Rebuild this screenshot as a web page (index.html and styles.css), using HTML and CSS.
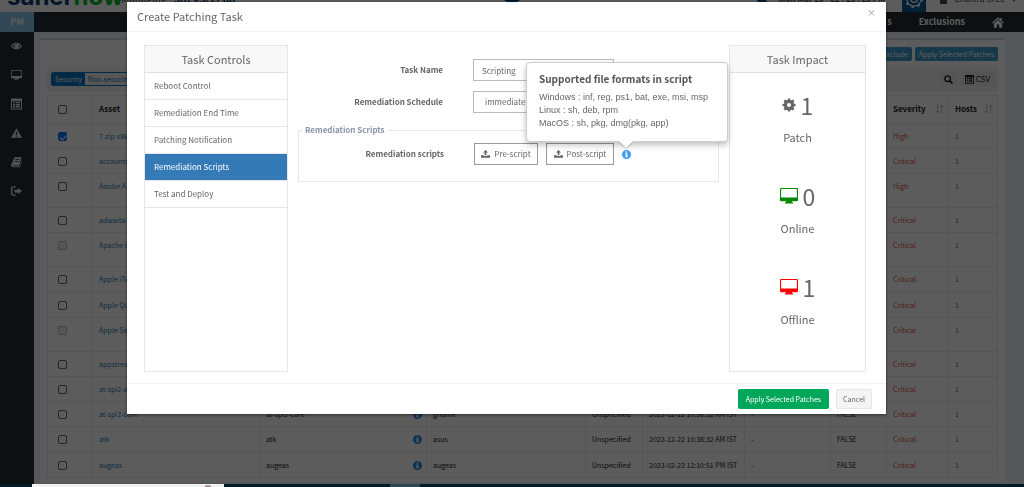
FILE: index.html
```
<!DOCTYPE html>
<html lang="en">
<head>
<meta charset="utf-8">
<title>Create Patching Task</title>
<link rel="stylesheet" href="styles.css">
</head>
<body>
<svg class="sprite" aria-hidden="true">
  <symbol id="monitor" viewBox="0 0 18 16"><path fill-rule="evenodd" d="M1.300 0h15.400A1.300 1.300 0 0 1 18 1.300v10.700a1.300 1.300 0 0 1-1.300 1.300H12v1H13V15.500H5v-1.200h1v-1h-4.700A1.300 1.300 0 0 1 0 12V1.300A1.300 1.300 0 0 1 1.300 0zM1.100 1.100v8.400h15.800V1.100z"/></symbol>
  <symbol id="gear" viewBox="0 0 16 16"><circle cx="8" cy="8" r="4.100" fill="none" stroke="currentColor" stroke-width="3.600"/><path id="tooth" d="M6.200 3.500L6.800.5h2.400l.6 3zM6.200 12.500l.6 3h2.400l.6-3z"/><use href="#tooth" transform="rotate(45 8 8)"/><use href="#tooth" transform="rotate(90 8 8)"/><use href="#tooth" transform="rotate(135 8 8)"/></symbol>
  <symbol id="upload" viewBox="0 0 16 14"><path d="M8 0l4.500 4.500H9.600V9H6.400V4.500H3.500zM0 9h5v1.500h6V9h5v4.500H0z"/></symbol>
  <symbol id="info" viewBox="0 0 16 16"><path fill-rule="evenodd" d="M8 0a8 8 0 1 1 0 16A8 8 0 0 1 8 0zM6.500 2.600v2.400h3V2.600zM5.500 6.400V8h1v3.500h-1V13h5v-1.500h-1V6.400z"/></symbol>
  <symbol id="sort" viewBox="0 0 16 16"><path d="M4 0h1.500v12H8l-3.200 4L1.500 12H4zM11 16h1.500V4H15l-3.200-4L8.500 4H11z"/></symbol>
  <symbol id="sheet" viewBox="0 0 16 16"><path fill-rule="evenodd" d="M0 0h16v16H0zM1.500 4v10.500h13V4zM3 5h3v2H3zM7 5h6v2H7zM3 8h3v2H3zM7 8h6v2H7zM3 11h3v2H3zM7 11h6v2H7z"/></symbol>
</svg>

<div class="app">
  <header class="top">
    <div class="logo">saner<span>now</span></div>
    <div class="site">Managing <b>SiteXSecPod</b></div>
    <div class="dots">•••</div>
    <div class="clock"><i></i>Mon Mar 20 - 02 : 23 : 20 PM</div>
    <div class="settings"><svg viewBox="0 0 24 24"><g fill="none" stroke="currentColor" stroke-width="1.500"><circle cx="12" cy="12" r="8.500"/><circle cx="12" cy="12" r="4"/><circle cx="12" cy="12" r="10" stroke-width="2" stroke-dasharray="3 4.850"/></g></svg></div>
    <div class="user"><i></i>Chaitra Sree <small>▾</small></div>
  </header>

  <nav class="bar">
    <a class="pm" href="#">PM</a>
    <a class="nav-link cut" href="#">s</a>
    <a class="nav-link" href="#">Exclusions</a>
    <a class="home" href="#" aria-label="Home"><svg viewBox="0 0 16 14"><path d="M8 0l3 2.700V1h2v3.500L16 7l-1 1.200L8 2.200 1 8.200 0 7zM8 3.500l5.500 4.700V14H9.500V9.500h-3V14h-4V8.200z"/></svg></a>
  </nav>

  <div class="shell">
    <aside class="side">
      <a href="#" aria-label="View"><svg viewBox="0 0 16 16"><path fill-rule="evenodd" d="M0 8c4-6.500 12-6.500 16 0-4 6.500-12 6.500-16 0zM2 8c3 4 9 4 12 0-1-1.200-2-2-3-2.500a3.600 3.600 0 1 1-6 0C4 6 3 6.800 2 8zM6 7h1.200c0-1 .5-1.500 1.300-1.500v-1C7 4.500 6 5.500 6 7z"/></svg></a>
      <a href="#" aria-label="Devices"><svg><use href="#monitor"/></svg></a>
      <a href="#" aria-label="Reports"><svg><use href="#sheet"/></svg></a>
      <a href="#" aria-label="Alerts"><svg viewBox="0 0 16 16"><path fill-rule="evenodd" d="M8 1l8 14H0zM7 6v4.500h2V6zM7 11.500v2h2v-2z"/></svg></a>
      <a href="#" aria-label="Library"><svg viewBox="0 0 16 16"><path fill-rule="evenodd" d="M5 1h10.500l-3.500 12H2.500c-.6 0-.5 1 .2 1H13l2.500-8 .5 1-2.500 8.500h-11C.5 15.500-.3 14 .3 12zM6.300 4l-.3 1h6l.3-1zM5.600 6.500l-.3 1h6l.3-1z"/></svg></a>
      <a href="#" aria-label="Sign out"><svg viewBox="0 0 16 16"><path d="M7 1v2H3.500Q2 3 2 4.500v7Q2 13 3.500 13H7v2H3.500Q0 15 0 11.500v-7Q0 1 3.500 1zM10 3.500L16 8l-6 4.500V10H5V6h5z"/></svg></a>
    </aside>

    <main class="panel">
      <div class="actions">
        <button class="blue">Exclude</button>
        <button class="blue">Apply Selected Patches</button>
      </div>
      <div class="tools">
        <div class="tabs"><button class="on">Security</button><button>Non-security</button></div>
        <button class="tool" aria-label="Search"><svg viewBox="0 0 16 16"><g fill="none" stroke="currentColor"><circle cx="6.500" cy="6.500" r="5" stroke-width="2.500"/><path d="M10 10l5 5" stroke-width="3"/></g></svg></button>
        <button class="tool"><svg><use href="#sheet"/></svg>CSV</button>
      </div>
      <table class="grid">
        <colgroup><col class="c-check"><col><col class="c-fix"><col class="c-vendor"><col class="c-type"><col class="c-date"><col class="c-dash"><col class="c-flag"><col class="c-sev"><col class="c-host"></colgroup>
        <thead><tr><th><input type="checkbox" aria-label="Select all"></th><th>Asset</th><th></th><th></th><th></th><th></th><th></th><th></th><th><div class="sortable">Severity <svg><use href="#sort"/></svg></div></th><th><div class="sortable">Hosts <svg><use href="#sort"/></svg></div></th></tr></thead>
        <tbody>
          <tr><td><input type="checkbox" checked aria-label="7-zip x86"></td><td><a href="#">7-zip x86</a></td><td></td><td></td><td></td><td></td><td></td><td></td><td class="sev">High</td><td><a href="#">1</a></td></tr>
          <tr><td><input type="checkbox" aria-label="accounts"></td><td><a href="#">accounts</a></td><td></td><td></td><td></td><td></td><td></td><td></td><td class="sev">Critical</td><td><a href="#">1</a></td></tr>
          <tr class="tall"><td><input type="checkbox" aria-label="Adobe A"></td><td><a href="#">Adobe A</a></td><td></td><td></td><td></td><td></td><td></td><td></td><td class="sev">High</td><td><a href="#">1</a></td></tr>
          <tr><td><input type="checkbox" aria-label="adwaita"></td><td><a href="#">adwaita-</a></td><td></td><td></td><td></td><td></td><td></td><td></td><td class="sev">Critical</td><td><a href="#">1</a></td></tr>
          <tr class="tall"><td><input type="checkbox" disabled aria-label="Apache"></td><td><a href="#">Apache H</a></td><td></td><td></td><td></td><td></td><td></td><td></td><td class="sev">Critical</td><td><a href="#">1</a></td></tr>
          <tr><td><input type="checkbox" aria-label="Apple iTu"></td><td><a href="#">Apple iTu</a></td><td></td><td></td><td></td><td></td><td></td><td></td><td class="sev">Critical</td><td><a href="#">1</a></td></tr>
          <tr><td><input type="checkbox" aria-label="Apple Qu"></td><td><a href="#">Apple Qu</a></td><td></td><td></td><td></td><td></td><td></td><td></td><td class="sev">Critical</td><td><a href="#">1</a></td></tr>
          <tr class="tall"><td><input type="checkbox" disabled aria-label="Apple Sa"></td><td><a href="#">Apple Sa</a></td><td></td><td></td><td></td><td></td><td></td><td></td><td class="sev">Critical</td><td><a href="#">1</a></td></tr>
          <tr><td><input type="checkbox" aria-label="appstrea"></td><td><a href="#">appstrea</a></td><td></td><td></td><td></td><td></td><td></td><td></td><td class="sev">Critical</td><td><a href="#">1</a></td></tr>
          <tr><td><input type="checkbox" aria-label="at-spi2-a"></td><td><a href="#">at-spi2-a</a></td><td></td><td></td><td></td><td></td><td></td><td></td><td class="sev">Critical</td><td><a href="#">1</a></td></tr>
          <tr><td><input type="checkbox" aria-label="at-spi2-core"></td><td><a href="#">at-spi2-core</a></td><td><div class="fix">at-spi2-core <svg><use href="#info"/></svg></div></td><td>gnome</td><td>Unspecified</td><td>2022-12-22 10:38:32 AM IST</td><td>-</td><td>FALSE</td><td class="sev">Critical</td><td><a href="#">1</a></td></tr>
          <tr><td><input type="checkbox" aria-label="atk"></td><td><a href="#">atk</a></td><td><div class="fix">atk <svg><use href="#info"/></svg></div></td><td>asus</td><td>Unspecified</td><td>2022-12-22 10:38:32 AM IST</td><td>-</td><td>FALSE</td><td class="sev">Critical</td><td><a href="#">1</a></td></tr>
          <tr><td><input type="checkbox" aria-label="augeas"></td><td><a href="#">augeas</a></td><td><div class="fix">augeas <svg><use href="#info"/></svg></div></td><td>augeas</td><td>Unspecified</td><td>2023-02-23 12:10:51 PM IST</td><td>-</td><td>FALSE</td><td class="sev">Critical</td><td><a href="#">1</a></td></tr>
        </tbody>
      </table>
    </main>
  </div>
</div>

<div class="backdrop">
  <section class="modal" role="dialog" aria-labelledby="title">
    <header class="modal-head"><h1 id="title">Create Patching Task</h1><button class="close" aria-label="Close">×</button></header>
    <div class="modal-body">
      <nav class="box controls">
        <h2>Task Controls</h2>
        <a href="#">Reboot Control</a>
        <a href="#">Remediation End Time</a>
        <a href="#">Patching Notification</a>
        <a class="active" href="#">Remediation Scripts</a>
        <a href="#">Test and Deploy</a>
      </nav>
      <form class="form">
        <div class="row"><label for="name">Task Name</label><input id="name" type="text" value="Scripting"></div>
        <div class="row"><label for="when">Remediation Schedule</label><select id="when"><option>immediate</option></select></div>
        <fieldset>
          <legend>Remediation Scripts</legend>
          <div class="row">
            <span class="label">Remediation scripts</span>
            <button type="button" class="script"><svg><use href="#upload"/></svg>Pre-script</button>
            <button type="button" class="script post"><svg><use href="#upload"/></svg>Post-script</button>
            <div class="hint">
              <svg><use href="#info"/></svg>
              <div class="tip" role="tooltip"><h3>Supported file formats in script</h3><p>Windows : inf, reg, ps1, bat, exe, msi, msp</p><p>Linux : sh, deb, rpm</p><p>MacOS : sh, pkg, dmg(pkg, app)</p></div>
            </div>
          </div>
        </fieldset>
      </form>
      <div class="box impact">
        <h2>Task Impact</h2>
        <div class="stat"><div class="num"><svg class="cog"><use href="#gear"/></svg>1</div>Patch</div>
        <div class="stat"><div class="num"><svg class="green"><use href="#monitor"/></svg>0</div>Online</div>
        <div class="stat"><div class="num"><svg class="red"><use href="#monitor"/></svg>1</div>Offline</div>
      </div>
    </div>
    <footer class="modal-foot"><button class="apply">Apply Selected Patches</button><button class="cancel">Cancel</button></footer>
  </section>
</div>
<div class="taskbar"><div class="search"><i></i></div><div class="running"></div></div>
</body>
</html>
```
FILE: styles.css
```
* { box-sizing: border-box; }
body { margin: 0; height: 100vh; overflow: hidden; background: #ecf0f5; color: #222; font: 7px/12px "Noto Sans CJK SC", "Noto Sans", sans-serif; }
svg { fill: currentColor; flex: none; }
a { color: #2a7cb4; text-decoration: none; }
button, input, select { font: inherit; color: inherit; margin: 0; }
button { padding: 0; border: 0; background: none; }
h1, h2, h3, p { margin: 0; font-weight: 400; }
.sprite { display: none; }

.app { margin-top: -38px; }
.top { display: flex; align-items: center; height: 50px; background: #fff; color: #444; font-size: 10px; white-space: nowrap; }
.logo { width: 121px; padding: 20px 0 0 7px; color: #0b3c76; font: 700 24px/28px Inter, sans-serif; }
.logo span { color: #00b428; }
.site { width: 379px; padding-top: 24px; }
.site b { margin-left: 5px; color: #123c5c; }
.dots { width: 24px; height: 24px; margin-top: 8px; padding-top: 15px; border-radius: 12px; background: #003a66; color: #fff; font-size: 8px; line-height: 10px; text-align: center; }
.clock { display: flex; align-items: center; gap: 12px; margin-left: auto; margin-right: 17px; padding-top: 24px; font-size: 8px; font-weight: 700; }
.clock i { width: 10px; height: 10px; border-radius: 5px; background: #1a4f7c; }
.settings { display: grid; place-items: center; width: 24px; height: 50px; padding-top: 24px; background: #005a96; color: #fff; }
.settings svg { width: 20px; height: 20px; }
.user { display: flex; gap: 7px; width: 98px; padding: 24px 0 0 14px; font-size: 9px; }
.user i { width: 7px; height: 11px; background: #444; }

.bar { display: flex; align-items: center; height: 20px; background: #222d32; color: #fff; font-size: 9px; font-weight: 700; }
.pm { display: grid; place-items: center; width: 34px; height: 20px; margin-right: auto; background: #8cc8ee; color: #fff; }
.nav-link { margin-right: 27px; color: #fff; }
.home { margin-right: 20px; color: #fff; }
.home svg { display: block; width: 12px; height: 11px; }

.shell { display: flex; }
.side { flex: none; display: flex; flex-direction: column; align-items: center; gap: 17px; width: 34px; padding: 8px 2px 0 0; background: #222d32; }
.side a { color: #dde3e8; }
.side svg { display: block; width: 11px; height: 12px; }
.panel { flex: 1; min-width: 0; margin: 6px 19px 3px 6px; padding: 7px 7px 4px; border-top: 2px solid #d2d6de; background: #fff; }
.actions { display: flex; justify-content: flex-end; gap: 3px; }
.blue { height: 14px; padding: 0 4px; border-radius: 2px; background: #3c9bd0; color: #fff; }
.tools { display: flex; align-items: center; gap: 4px; margin: 6px 0 4px; padding: 5px 4px; background: #f2f2f2; }
.tabs { display: flex; margin-right: auto; border: 1px solid #0075c0; border-radius: 2px; color: #0075c0; }
.tabs button { padding: 0 3px; }
.tabs .on { background: #0075c0; color: #fff; }
.tool { display: flex; align-items: center; gap: 2px; height: 14px; padding: 0 4px; background: #e9e9e9; font-size: 8px; }
.tool svg { width: 9px; height: 9px; }

.grid { width: 100%; table-layout: fixed; border-collapse: collapse; }
.c-check { width: 45px; } .c-fix { width: 167px; } .c-vendor { width: 159px; } .c-type { width: 57px; } .c-date { width: 102px; }
.c-dash { width: 86px; } .c-flag { width: 56px; } .c-sev { width: 62px; } .c-host { width: 49px; }
.grid th, .grid td { height: 25px; padding: 6px 4px 4px 6px; border: 1px solid #eaeaea; text-align: left; vertical-align: top; white-space: nowrap; }
.grid th { height: 28px; padding-top: 7px; font-size: 8px; }
.grid tbody tr:nth-child(6n) td { height: 26px; }
.grid .tall td { height: 34px; }
.grid td:first-child, .grid th:first-child { padding-left: 10px; }
.grid input { display: block; appearance: none; width: 9px; height: 9px; margin-top: 2px; border: 1px solid #666; border-radius: 2px; background: #fff; }
.grid input:disabled { border-color: #bbb; background: #eee; }
.grid input:checked { display: grid; place-items: center; border-color: #0075ff; background: #0075ff; }
.grid input:checked::after { content: ""; width: 3px; height: 5px; border: solid #fff; border-width: 0 1px 1px 0; transform: rotate(45deg); }
.sev { color: #dd4b39; }
.sortable, .fix { display: flex; align-items: center; justify-content: space-between; }
.sortable svg { width: 9px; height: 10px; color: #bbb; }
.fix svg { width: 9px; height: 9px; color: #2d8ee8; }

.backdrop { position: fixed; inset: 0; padding: 2px 11px 0 0; background: rgba(0, 0, 0, .64); }
.modal { width: 759px; max-width: 100%; margin: 0 auto; background: #fff; color: #666; box-shadow: 0 1px 3px rgba(0, 0, 0, .5); }
.modal-head { display: flex; justify-content: space-between; height: 30px; padding: 6px 10px; border-bottom: 1px solid #f2f2f2; }
.modal-head h1 { font-size: 11px; line-height: 16px; }
.close { height: 10px; color: #999; font-size: 9px; line-height: 10px; }
.modal-body { display: flex; gap: 10px; padding: 13px 20px 11px 17px; }
.box { border: 1px solid #e6e6e6; }
.box h2 { height: 27px; border-bottom: 1px solid #e2e2e2; background: #f8f8f8; font-size: 11px; line-height: 26px; text-align: center; }
.controls { width: 144px; }
.controls a { display: block; height: 27px; padding-left: 9px; border-bottom: 1px solid #e6e6e6; color: #666; font-size: 8px; line-height: 26px; }
.controls .active { background: #337ab7; color: #fff; }
.form { flex: 1; min-width: 0; padding-top: 14px; font-size: 8px; }
.row { display: flex; align-items: center; margin-bottom: 10px; }
.row label, .label { width: 145px; margin-right: 30px; font-weight: 700; text-align: right; }
.row input, .row select { width: 141px; height: 22px; padding: 0 8px; border: 1px solid #bbb; border-radius: 0; background: #fff; appearance: none; }
.row select { padding-left: 11px; }
fieldset { margin: 0; padding: 6px 0 16px; border: 1px solid #e8e8e8; }
fieldset .row { margin: 0; }
legend { margin-left: 3px; padding: 0 3px; color: #8a93a8; font-weight: 700; line-height: 14px; }
.script { display: flex; align-items: center; justify-content: center; gap: 4px; width: 64px; height: 22px; border: 1px solid #999; }
.script svg { width: 9px; height: 8px; }
.post { width: 68px; margin-left: 8px; }
.hint { position: relative; margin-left: 8px; color: #3f9bf5; }
.hint svg { display: block; width: 9px; height: 9px; }
.tip { position: absolute; right: -97px; bottom: 17px; min-width: 202px; padding: 8px 12px 11px; border: 1px solid #ccc; border-radius: 4px; background: #fff; color: #666; box-shadow: 0 3px 6px rgba(0, 0, 0, .25); font: 9px/13px "Liberation Sans", Arial, sans-serif; white-space: nowrap; }
.tip::after { content: ""; position: absolute; right: 94px; bottom: -7px; border: 7px solid transparent; border-width: 7px 7px 0; border-top-color: #fff; filter: drop-shadow(0 1px 1px rgba(0, 0, 0, .25)); }
.tip h3 { margin-bottom: 5px; color: #555; font: 700 10px/15px "Noto Sans CJK SC", sans-serif; }
.impact { width: 137px; padding-bottom: 7px; text-align: center; font-size: 11px; line-height: 16px; }
.stat { margin: 18px 0 37px; }
.num { display: flex; align-items: center; justify-content: center; gap: 5px; height: 28px; margin-bottom: 10px; font-size: 23px; line-height: 28px; }
.num svg { width: 18px; height: 16px; }
.num .cog { width: 14px; height: 14px; }
.green { color: #008a00; }
.red { color: #f00; }
.modal-foot { display: flex; justify-content: flex-end; gap: 7px; padding: 5px 14px 5px; border-top: 1px solid #f2f2f2; }
.modal-foot button { height: 20px; padding: 0 8px; border-radius: 2px; }
.modal-foot .apply { background: #00a65a; color: #fff; }
.modal-foot .cancel { border: 1px solid #e6e6e6; background: #f4f4f4; padding: 0 6px; }

.taskbar { position: fixed; inset: auto 0 0; display: flex; height: 3px; padding-left: 32px; background: #001a28; }
.search { display: flex; justify-content: flex-end; width: 192px; padding: 1px 12px 0; overflow: hidden; background: #f2f2f2; }
.search i { width: 8px; height: 8px; border-radius: 4px; background: #a58c7c; }
.running { width: 30px; margin-left: 166px; background: #2c4654; }
```
